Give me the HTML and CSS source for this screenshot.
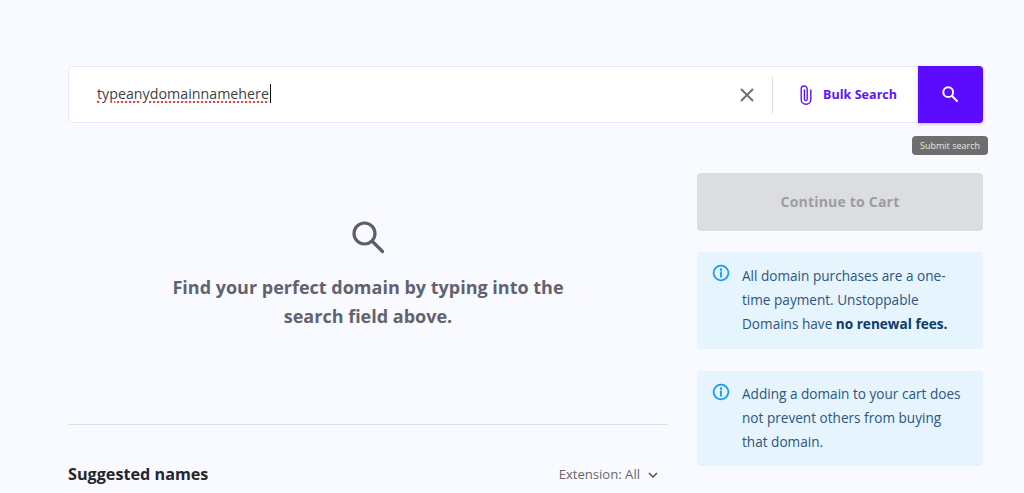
FILE: index.html
```html
<!DOCTYPE html>
<html lang="en">
<head>
<meta charset="utf-8">
<title>Domain search</title>
<link rel="stylesheet" href="styles.css">
</head>
<body>
<main class="page">
  <section class="search">
    <div class="query"><span class="typed">typeanydomainnamehere</span><span class="caret"></span></div>
    <svg class="clear" viewBox="0 0 14 14" width="14" height="14"><path d="M1 1l12 12M13 1L1 13"/></svg>
    <div class="sep"></div>
    <div class="bulk">
      <svg class="clip" viewBox="0 0 12 20" width="12" height="20"><path d="M10.8 5v9.4a4.8 4.8 0 0 1-9.6 0V4a3 3 0 0 1 6 0v10.2a1.4 1.4 0 0 1-2.8 0V5"/></svg>
      <span>Bulk Search</span>
    </div>
    <button class="submit" type="button" aria-label="Submit search">
      <svg viewBox="0 0 18 18" width="18" height="18"><circle cx="7.2" cy="7.2" r="4.9"/><path d="M11 11l5 5"/></svg>
    </button>
    <div class="tooltip">Submit search</div>
  </section>
  <div class="columns">
    <section class="left">
      <div class="empty">
        <svg viewBox="0 0 34 34" width="34" height="34"><circle cx="13.5" cy="13.5" r="10.5"/><path d="M21.5 21.5L31.5 31.5"/></svg>
        <p>Find your perfect domain by typing into the search field above.</p>
      </div>
      <div class="suggest">
        <h2>Suggested names</h2>
        <div class="ext"><span>Extension: All</span>
          <svg viewBox="0 0 10 6" width="10" height="6"><path d="M1 1l4 4 4-4"/></svg>
        </div>
      </div>
    </section>
    <aside class="right">
      <button class="cart" type="button">Continue to Cart</button>
      <div class="info">
        <svg viewBox="0 0 18 18" width="18" height="18"><circle cx="9" cy="9" r="7.4"/><path d="M9 8.2v4.6M9 5v1.2"/></svg>
        <p>All domain purchases are a one-time payment. Unstoppable Domains have <b>no renewal fees.</b></p>
      </div>
      <div class="info">
        <svg viewBox="0 0 18 18" width="18" height="18"><circle cx="9" cy="9" r="7.4"/><path d="M9 8.2v4.6M9 5v1.2"/></svg>
        <p>Adding a domain to your cart does not prevent others from buying that domain.</p>
      </div>
    </aside>
  </div>
</main>
</body>
</html>
```
FILE: styles.css
```css
* { box-sizing: border-box; }
html, body { margin: 0; height: 493px; overflow: hidden; }
body { background: #f9faff; font-family: "Open Sans", sans-serif; }
.page { padding: 66px 41px 0 68px; }
.search {
  position: relative; display: flex; align-items: center; height: 57px;
  background: #fff; border: 1px solid #e8e9f0; border-radius: 4px;
}
.query { flex: 1; display: flex; align-items: center; padding: 0 0 3px 28px; font-size: 14.25px; color: #3f3f46; }
.typed { text-decoration: underline dotted #e8413f 1.5px; text-underline-offset: 3px; }
.caret { width: 1px; height: 19px; background: #111; margin-left: 1px; }
.clear { fill: none; stroke: #6f6f74; stroke-width: 1.9; margin-right: 18px; }
.sep { width: 1px; height: 36px; background: #dddde2; }
.bulk { display: flex; align-items: center; gap: 11px; width: 145px; padding: 0 0 0 27px; color: #5c14ff; font-size: 12.5px; font-weight: 700; letter-spacing: .05px; }
.clip { flex: none; fill: none; stroke: #5c14ff; stroke-width: 1.4; stroke-linecap: round; }
.submit {
  width: 65px; height: 57px; margin: -1px -1px -1px 0; border: 0; padding: 0 0 2px;
  border-radius: 0 4px 4px 0; background: #5b0cff; display: flex; align-items: center; justify-content: center;
  box-shadow: 0 1px 3px rgba(60, 20, 160, .3);
}
.submit svg { fill: none; stroke: #fff; stroke-width: 2; stroke-linecap: round; margin-left: -2px; }
.tooltip {
  position: absolute; right: -6px; top: 69px; width: 76px; height: 19px; border-radius: 4px;
  background: #6e6e6e; color: #e6e6e6; font-size: 9px; line-height: 19px; text-align: center;
}
.columns { display: flex; justify-content: space-between; padding-top: 50px; }
.left { width: 600px; }
.empty { height: 252px; border-bottom: 1px solid #dddfe6; padding-top: 47px; display: flex; flex-direction: column; align-items: center; }
.empty svg { fill: none; stroke: #5d5d70; stroke-width: 3.2; stroke-linecap: round; margin-left: -1px; }
.empty p { width: 420px; margin: 19px 0 0; text-align: center; font-size: 18px; line-height: 29px; font-weight: 700; color: #62626f; }
.suggest { display: flex; justify-content: space-between; align-items: center; padding: 37px 10px 0 0; }
.suggest h2 { margin: 0; font-size: 16.2px; line-height: 24px; font-weight: 700; color: #26262c; }
.ext { display: flex; align-items: center; gap: 8px; font-size: 13.1px; color: #66666e; }
.ext svg { fill: none; stroke: #55555c; stroke-width: 1.6; margin-top: 1px; }
.right { width: 286px; display: flex; flex-direction: column; }
.cart {
  height: 58px; border: 0; border-radius: 4px; padding: 0 0 2px; background: #dcdde0; color: #9b9ca3;
  font: 700 14px "Open Sans", sans-serif; letter-spacing: .2px;
}
.info { display: flex; gap: 11px; background: #e5f4fd; border-radius: 4px; padding: 12px 16px 13px; margin-top: 21px; }
.info + .info { margin-top: 22px; padding-bottom: 12px; }
.info + .info p { margin-top: -1px; }
.info svg { flex: none; fill: none; stroke: #1a9bf5; stroke-width: 1.8; stroke-linecap: round; margin-left: -1px; }
.info p { margin: 0 0 0 1px; font-size: 13.6px; line-height: 24px; color: #2c5680; }
.info b { color: #0d3a66; }
```
